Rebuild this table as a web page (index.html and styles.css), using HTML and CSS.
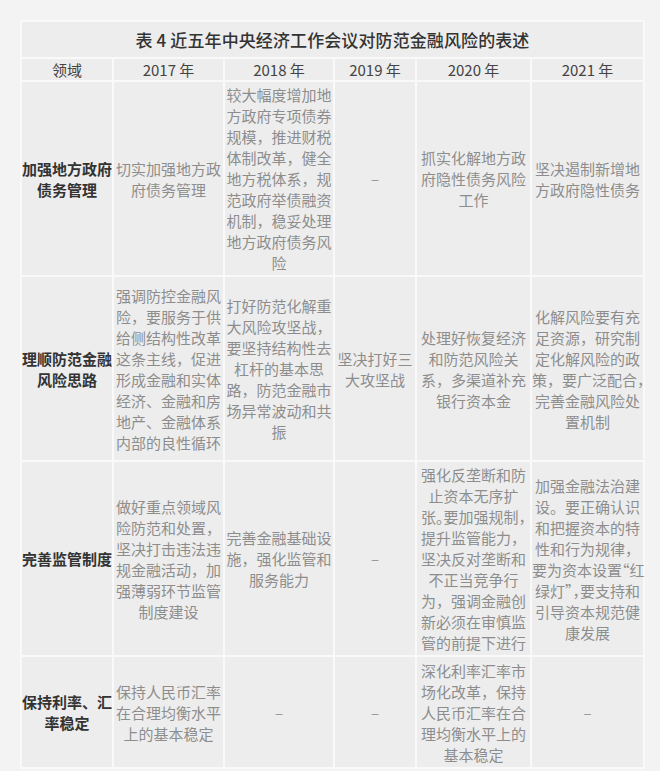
FILE: index.html
```html
<!DOCTYPE html>
<html lang="zh-CN">
<head>
<meta charset="utf-8">
<title>表 4 近五年中央经济工作会议对防范金融风险的表述</title>
<link rel="stylesheet" href="styles.css">
</head>
<body>
<div class="page">
<table class="tbl">
  <colgroup>
    <col class="c-field"><col class="c-2017"><col class="c-2018"><col class="c-2019"><col class="c-2020"><col class="c-2021">
  </colgroup>
  <tr class="r-title"><th colspan="6" class="title">表 4 近五年中央经济工作会议对防范金融风险的表述</th></tr>
  <tr class="r-head">
    <th>领域</th><th>2017 年</th><th>2018 年</th><th>2019 年</th><th>2020 年</th><th>2021 年</th>
  </tr>
  <tr class="r1">
    <td class="field">加强地方政府<br>债务管理</td>
    <td>切实加强地方政<br>府债务管理</td>
    <td>较大幅度增加地<br>方政府专项债券<br>规模，推进财税<br>体制改革，健全<br>地方税体系，规<br>范政府举债融资<br>机制，稳妥处理<br>地方政府债务风<br>险</td>
    <td class="dash">–</td>
    <td>抓实化解地方政<br>府隐性债务风险<br>工作</td>
    <td>坚决遏制新增地<br>方政府隐性债务</td>
  </tr>
  <tr class="r2">
    <td class="field">理顺防范金融<br>风险思路</td>
    <td>强调防控金融风<br>险，要服务于供<br>给侧结构性改革<br>这条主线，促进<br>形成金融和实体<br>经济、金融和房<br>地产、金融体系<br>内部的良性循环</td>
    <td>打好防范化解重<br>大风险攻坚战，<br>要坚持结构性去<br>杠杆的基本思<br>路，防范金融市<br>场异常波动和共<br>振</td>
    <td>坚决打好三<br>大攻坚战</td>
    <td>处理好恢复经济<br>和防范风险关<br>系，多渠道补充<br>银行资本金</td>
    <td>化解风险要有充<br>足资源，研究制<br>定化解风险的政<br>策，要广泛配合，<br>完善金融风险处<br>置机制</td>
  </tr>
  <tr class="r3">
    <td class="field">完善监管制度</td>
    <td>做好重点领域风<br>险防范和处置，<br>坚决打击违法违<br>规金融活动，加<br>强薄弱环节监管<br>制度建设</td>
    <td>完善金融基础设<br>施，强化监管和<br>服务能力</td>
    <td class="dash">–</td>
    <td>强化反垄断和防<br>止资本无序扩<br><span class="tight">张。要加强规制，</span><br>提升监管能力，<br>坚决反对垄断和<br>不正当竞争行<br>为，强调金融创<br>新必须在审慎监<br>管的前提下进行</td>
    <td>加强金融法治建<br>设。要正确认识<br>和把握资本的特<br>性和行为规律，<br><span class="tight">要为资本设置“红</span><br><span class="tight">绿灯”，要支持和</span><br>引导资本规范健<br>康发展</td>
  </tr>
  <tr class="r4">
    <td class="field">保持利率、汇<br>率稳定</td>
    <td>保持人民币汇率<br>在合理均衡水平<br>上的基本稳定</td>
    <td class="dash">–</td>
    <td class="dash">–</td>
    <td>深化利率汇率市<br>场化改革，保持<br>人民币汇率在合<br>理均衡水平上的<br>基本稳定</td>
    <td class="dash">–</td>
  </tr>
</table>
</div>
</body>
</html>
```
FILE: styles.css
```css
html, body {
  margin: 0;
  padding: 0;
  background: #f3f3f3;
}
.page {
  padding: 20px 0 0 20px;
  font-family: "Noto Sans CJK SC", "Noto Sans", sans-serif;
}
.tbl {
  width: 623px;
  table-layout: fixed;
  border-collapse: collapse;
  background: #ededed;
}
.c-field { width: 92px; }
.c-2017 { width: 111px; }
.c-2018 { width: 110px; }
.c-2019 { width: 82px; }
.c-2020 { width: 115px; }
.c-2021 { width: 113px; }

.tbl th, .tbl td {
  border: 2px solid #f9f9f9;
  padding: 0;
  text-align: center;
  vertical-align: middle;
  font-size: 15px;
  line-height: 21px;
  color: #8d8d8d;
  font-weight: 400;
  white-space: nowrap;
}
.tbl th.title {
  font-size: 17px;
  font-weight: 500;
  color: #333;
  letter-spacing: 0.1px;
}
.r-title { height: 37px; }
.r-head { height: 23px; }
.r-head th { color: #444; }
.r1 { height: 195px; }
.r2 { height: 185px; }
.r3 { height: 195px; }
.r4 { height: 112px; }
.tbl td.field {
  color: #333;
  font-weight: 700;
}
.tbl td.dash { color: #999; }
.tight {
  font-feature-settings: "halt";
}
```
